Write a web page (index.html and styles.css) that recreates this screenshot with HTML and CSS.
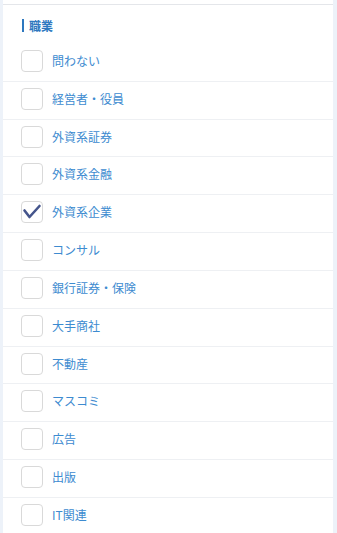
FILE: index.html
```html
<!DOCTYPE html>
<html lang="ja">
<head>
<meta charset="utf-8">
<link rel="stylesheet" href="styles.css">
</head>
<body>
<div class="panel">
  <div class="top-gap"></div>
  <div class="section">
    <h2 class="heading">職業</h2>
    <ul class="list">
      <li class="row"><span class="box"></span><span class="label">問わない</span></li>
      <li class="row"><span class="box"></span><span class="label">経営者・役員</span></li>
      <li class="row"><span class="box"></span><span class="label">外資系証券</span></li>
      <li class="row"><span class="box"></span><span class="label">外資系金融</span></li>
      <li class="row"><span class="box checked"><svg viewBox="0 0 22 22" width="22" height="22"><path d="M3.5 9.5 L8.5 16 L18.5 5" fill="none" stroke="#45558c" stroke-width="2.6" stroke-linecap="round" stroke-linejoin="round"/></svg></span><span class="label">外資系企業</span></li>
      <li class="row"><span class="box"></span><span class="label">コンサル</span></li>
      <li class="row"><span class="box"></span><span class="label">銀行証券・保険</span></li>
      <li class="row"><span class="box"></span><span class="label">大手商社</span></li>
      <li class="row"><span class="box"></span><span class="label">不動産</span></li>
      <li class="row"><span class="box"></span><span class="label">マスコミ</span></li>
      <li class="row"><span class="box"></span><span class="label">広告</span></li>
      <li class="row"><span class="box"></span><span class="label">出版</span></li>
      <li class="row"><span class="box"></span><span class="label">IT関連</span></li>
    </ul>
  </div>
</div>
</body>
</html>
```
FILE: styles.css
```css
html, body {
  margin: 0;
  padding: 0;
  background: #edf2f9;
  font-family: "Noto Sans CJK JP", "Noto Sans", sans-serif;
  overflow: hidden;
}
.panel {
  margin: 0 4px 0 3px;
  background: #fff;
  min-height: 533px;
}
.top-gap {
  height: 4px;
  border-bottom: 1px solid #e4e6ea;
}
.section {
  padding-top: 14px;
}
.heading {
  margin: 0 0 0 19px;
  padding-left: 5px;
  border-left: 2px solid #2e78bf;
  font-size: 12px;
  line-height: 13px;
  font-weight: bold;
  color: #2e78bf;
  height: 13px;
}
.list {
  list-style: none;
  margin: 12px 0 0 0;
  padding: 0;
}
.row {
  box-sizing: border-box;
  height: 37.83px;
  display: flex;
  align-items: flex-start;
  padding: 6px 0 0 18px;
  border-bottom: 1px solid #eef0f3;
}
.box {
  box-sizing: border-box;
  width: 22px;
  height: 22px;
  border: 1px solid #d9d9d9;
  border-radius: 4px;
  background: #fff;
  flex: none;
  position: relative;
}
.box svg {
  position: absolute;
  left: -1px;
  top: -1px;
}
.label {
  margin-left: 9px;
  font-size: 12px;
  line-height: 22px;
  color: #3d8bd0;
}
```
